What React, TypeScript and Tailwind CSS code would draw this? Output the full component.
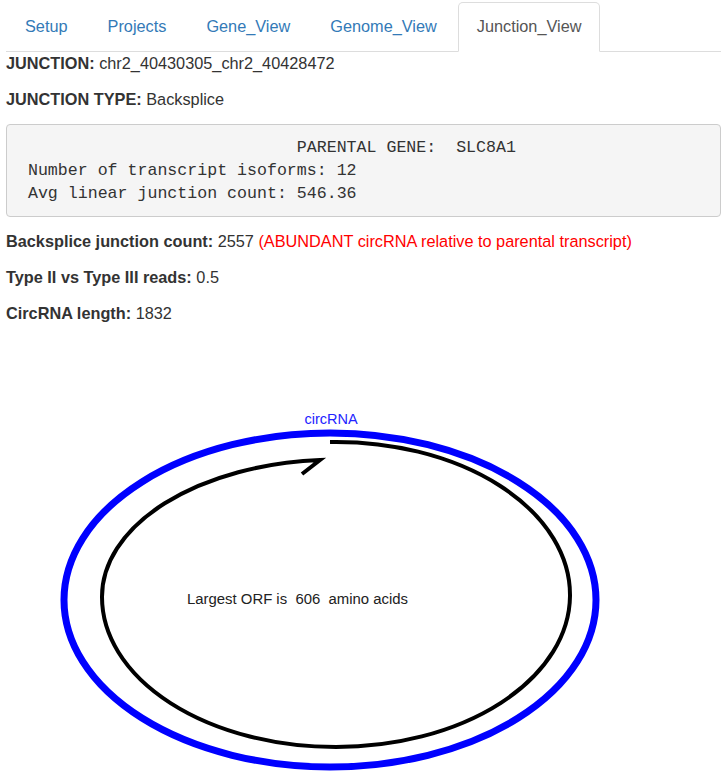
import React from "react"

const tabs = ["Setup", "Projects", "Gene_View", "Genome_View", "Junction_View"]

function Field({ label, children }: { label: string; children: React.ReactNode }) {
  return (
    <p className="mb-[13px] leading-[23px]">
      <b className="font-bold">{label}</b> {children}
    </p>
  )
}

function CircPlot() {
  return (
    <svg className="block" width="715" height="446" viewBox="6 338 715 446">
      {/* outer circRNA ring */}
      <ellipse cx="330" cy="600" rx="266" ry="167" fill="none" stroke="#0000ff" strokeWidth="7" />
      <text x="331" y="424" textAnchor="middle" fill="#2424ff" fontSize="14.5" fontFamily="'Liberation Sans', Arial, sans-serif">
        circRNA
      </text>
      {/* ORF arrow */}
      <path
        d="M 330 442 A 234 153 0 0 1 570 596 A 234 152 0 0 1 336 747 A 234 150 0 0 1 102 597 A 234 137 0 0 1 320 460 L 302 474"
        fill="none"
        stroke="#000"
        strokeWidth="4"
        strokeLinejoin="miter"
      />
      <text x="187" y="604" fill="#222" fontSize="14.9" className="whitespace-pre" fontFamily="'Liberation Sans', Arial, sans-serif">
        Largest ORF is  606  amino acids
      </text>
    </svg>
  )
}

export default function App() {
  const active = "Junction_View"
  return (
    <div className="bg-white text-[#333] text-[16.3px] font-['Liberation_Sans',Arial,sans-serif] pl-[6px] pr-[7px] min-h-[784px]">
      <ul className="flex mt-[2px] border-b border-[#ddd]">
        {tabs.map(t => (
          <li key={t} className="mr-[2px] -mb-px">
            <a
              className={`block px-[18px] pt-[12px] pb-[13px] leading-[23px] border rounded-t-[5px] ${
                t === active
                  ? "border-[#ddd] border-b-transparent bg-white text-[#555]"
                  : "border-transparent text-[#337ab7]"
              }`}
            >
              {t}
            </a>
          </li>
        ))}
      </ul>

      <Field label="JUNCTION:">chr2_40430305_chr2_40428472</Field>
      <Field label="JUNCTION TYPE:">Backsplice</Field>

      <pre className="mb-[13px] px-[11px] py-[11px] bg-[#f5f5f5] border border-[#ccc] rounded-[4px] text-[16.6px] leading-[23px] text-[#333] font-['Liberation_Mono','Courier_New',monospace]">
{"                            PARENTAL GENE:  SLC8A1\n Number of transcript isoforms: 12\n Avg linear junction count: 546.36"}
      </pre>

      <Field label="Backsplice junction count:">
        2557 <span className="text-[#ff0000]">(ABUNDANT circRNA relative to parental transcript)</span>
      </Field>
      <Field label="Type II vs Type III reads:">0.5</Field>
      <Field label="CircRNA length:">1832</Field>

      <CircPlot />
    </div>
  )
}
